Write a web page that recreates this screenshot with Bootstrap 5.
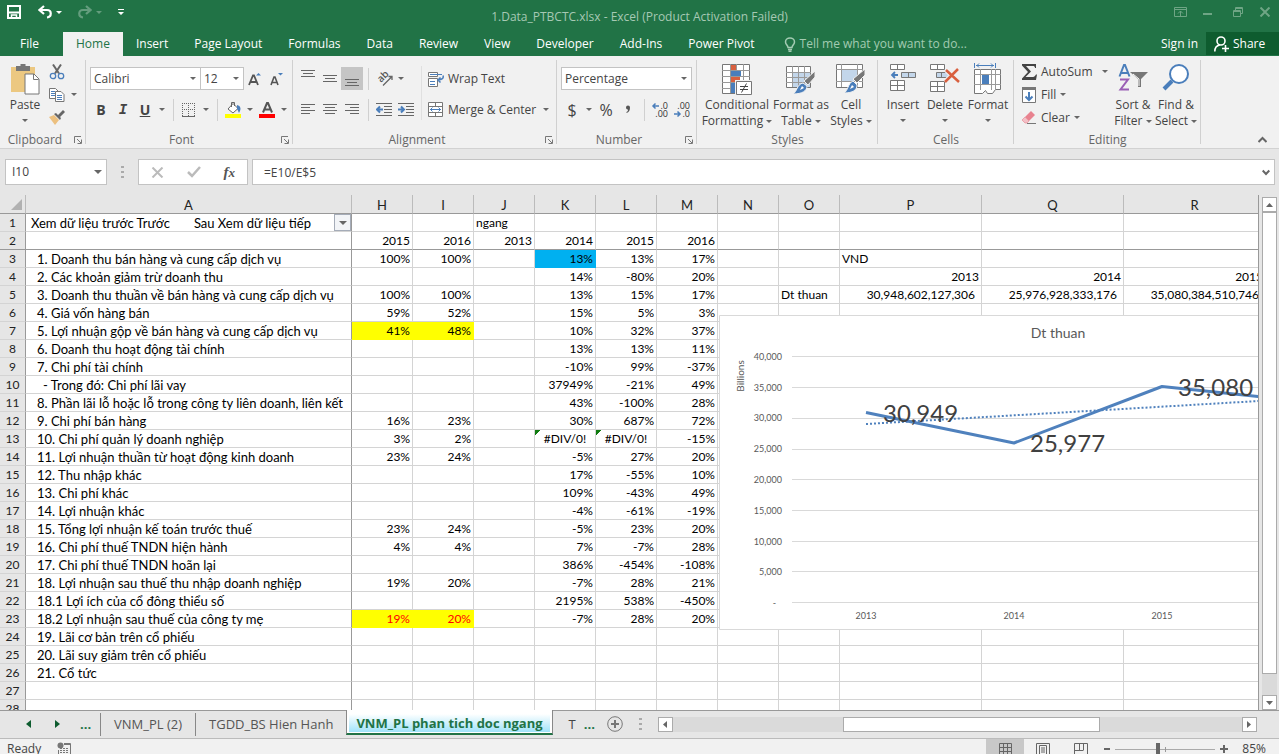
<!DOCTYPE html>
<html lang="en">
<head>
<meta charset="utf-8">
<meta name="viewport" content="width=device-width, initial-scale=1">
<title>1.Data_PTBCTC.xlsx - Excel</title>
<link href="https://cdn.jsdelivr.net/npm/bootstrap@5.3.0/dist/css/bootstrap.min.css" rel="stylesheet">
<style>
:root{--xl:#217346;--ink:#444;--line:#d4d4d4;--edge:#999;--chrome:#e6e6e6}
body{font:12px/16px "Open Sans","Noto Sans",sans-serif;color:var(--ink);background:var(--chrome);height:100vh;overflow:hidden}
button{font:inherit;color:inherit;background:none;border:0;padding:0}
svg{display:block;flex:none}
.titlebar{height:32px;background:var(--xl);color:#a6c9b4}
.caption-text{left:0;right:0;top:9px;pointer-events:none}
.quick{padding-left:6px}
.quick .dim{opacity:.3}
.quick .tri{border-top-color:#fff}
.win{gap:12px;color:#6fa585}
.tabs-bar{height:24px;background:var(--xl);color:#fff}
.tabs-bar .nav-link{color:#fff;padding:4px 13px;border:0;border-radius:0;line-height:16px}
.tabs-bar .nav-link.active{background:#f1f1f1;color:var(--xl)}
.tabs-bar .file-tab{padding-left:20px;padding-right:24px}
.tell{color:#a3cbb2}
.share{background:#0e5c2f;height:23px;width:73px}
.ribbon{height:93px;background:#f1f1f1;border-bottom:1px solid #d2d2d2}
.group{position:relative;padding-bottom:1px}
.group::after{content:"";position:absolute;right:0;top:4px;bottom:4px;width:1px;background:#d0d0d0}
.group-body{height:76px}
.group-name{height:16px;color:#666;text-align:center;position:relative}
.launch{position:absolute;right:4px;top:4px}
.g-clip{width:86px}.g-font{width:207px}.g-align{width:264px}.g-num{width:140px}
.g-style{width:181px}.g-cells{width:136px}.g-edit{width:187px}
.tools{padding-top:11px;gap:8px}
.tool-row{height:23px;display:flex;align-items:center}
.ib{width:22px;height:23px;display:flex;align-items:center;justify-content:center}
.ib.on{background:#c5c5c5}
.ab{width:12px;height:23px;display:flex;align-items:center;justify-content:center}
.tri{display:inline-block;width:0;height:0;border:3px solid transparent;border-top-color:#666;border-bottom:0;vertical-align:middle}
.vr-s{width:10px;height:22px;background:linear-gradient(#d0d0d0,#d0d0d0) center/1px 100% no-repeat}
.vr-l{width:1px;height:54px;margin-top:10px;background:#e0e0e0}
.wide-tools{padding-left:6px}
.big{padding-top:7px;display:flex;flex-direction:column;align-items:center;text-align:center;white-space:nowrap}
.big svg{margin-bottom:2px}
.big>.tri{margin-top:6px}
.w-42{width:42px}.w-44{width:44px}.w-56{width:56px}.w-72{width:72px}
.letter{font-weight:700;font-size:14px}
.fx-label{font:italic 700 15px "Liberation Serif",serif;color:#555}
.overhang{overflow:visible}
.form-select,.form-control{font:inherit;color:var(--ink);border-radius:0;border:1px solid #c3c3c3;background-color:#fff;padding:0 3px;height:23px;
--bs-form-select-bg-img:url("data:image/svg+xml,%3Csvg xmlns='http://www.w3.org/2000/svg' viewBox='0 0 6 3'%3E%3Cpath d='M0 0h6L3 3z' fill='%23666'/%3E%3C/svg%3E");
background-size:6px 3px;background-position:right 4px center}
.sel-font{width:111px}.sel-size{width:44px;margin-left:-1px}.sel-num{width:131px}
.formula{height:46px;padding:10px 4px 10px 5px}
.formula .name-box{width:102px;height:26px;padding-left:6px;background-size:8px 4px}
.boxed{height:26px;border:1px solid #c3c3c3;background:#fff}
.fx-box{width:110px}
.formula .form-control{height:24px;border:0;padding-left:11px}
.grip{width:3px;height:12px;background:repeating-linear-gradient(#aaa 0 2px,transparent 2px 5px)}
.formula .grip{margin:0 14px}
.main-area{min-height:0}
.sheet{position:relative;overflow:hidden;background:#fff;border-right:1px solid var(--edge)}
.cells{table-layout:fixed;width:1266px;border-collapse:separate;border-spacing:0;font:12px/16px Lato,"Open Sans",sans-serif;color:#000}
.cells th,.cells td{height:18px;padding:1px 2px 0;border-right:1px solid var(--line);border-bottom:1px solid var(--line);overflow:hidden;white-space:nowrap;text-align:right}
.cells th{background:var(--chrome);font-weight:400;text-align:center;color:#222}
.cells thead th{height:19px;font-size:13px;border-right-color:#bbb;border-bottom-color:var(--edge)}
.cells tbody th{border-right-color:var(--edge);padding:1px 0 0}
.cells .c-a{text-align:left;font-size:13px;padding-left:11px;border-right-color:var(--edge);position:relative}
.cells .c-a.flush{padding-left:5px}
.cells .c-a.deep{padding-left:17px}
.cells .frozen>*{border-bottom-color:var(--edge)}
.cells .t-left{text-align:left}
.cells .money{padding-right:6px}
.cells .hl-y{background:#ff0;border-color:#ff0}
.cells .hl-b{background:#00b0f0;border-color:#00b0f0}
.cells .neg{color:#f00}
.cells .err{text-align:center;background:linear-gradient(135deg,#107c10 4px,transparent 4px) 0 0/8px 8px no-repeat}
.filter{position:absolute;right:0;top:0;width:17px;height:17px;border:1px solid #a5acb8;background:#f2f4f7;display:flex;align-items:center;justify-content:center}
.filter .tri{border-width:4px 4px 0}
.chart{position:absolute;left:719px;top:120px;font-family:Lato,"Open Sans",sans-serif}
.vbar{width:20px;padding:2px 2px 0 3px}
.sbtn{width:15px;height:15px;border:1px solid #ababab;background:#fff;display:flex;align-items:center;justify-content:center}
.track{background:#dadada}
.thumb{background:#fff;border:1px solid #ababab}
.vthumb{flex:462 0 0}.vgap{flex:21 0 0}
.sheetbar{height:29px;border-bottom:1px solid #bbb;font-size:13px}
.sheetbar .nav-part{border-top:1px solid var(--edge)}
.tab-nav{width:100px;height:25px;padding-left:26px}
.tab-more{width:105px;height:25px}
.tab-btn{height:23px;line-height:20px;padding:0 13px 2px;border-left:1px solid #888;margin-top:2px;white-space:nowrap;color:#555}
.tab-on{height:25px;border:solid #888;border-width:0 1px;border-bottom:2px solid var(--xl);background:linear-gradient(#fff,#a0e3fa) 2px 4px/calc(100% - 4px) 18px no-repeat #fff;color:var(--xl);font-weight:700;padding:2px 9px 0;white-space:nowrap}
.dots{color:var(--xl);font-weight:700}
.hscroll{padding:6px 22px 0 0}
.hthumb{flex:255 0 0;height:15px}.hgap-a{flex:171 0 0;height:15px}.hgap-b{flex:142 0 0;height:15px}
.status{height:15px;background:#f1f1f1;overflow:hidden;padding-left:7px}
.status .line{height:20px;display:flex;align-items:center}
.view{width:38px;height:20px;display:flex;align-items:center;justify-content:center}
.view.on{background:#c8c8c8}
.zoom-range{appearance:none;width:100px;height:14px;background:linear-gradient(#999,#999) 50px 50%/1px 5px no-repeat,linear-gradient(#aaa,#aaa) 0 50%/100% 1px no-repeat;margin:0 5px}
.zoom-range::-webkit-slider-thumb{appearance:none;width:4px;height:12px;background:#666}
.zoom-label{padding:0 13px 0 14px}
</style>
</head>
<body class="d-flex flex-column">

<header>
  <div class="titlebar d-flex align-items-center position-relative">
    <div class="quick d-flex align-items-center pb-2 text-white">
      <button aria-label="Save"><svg width="16" height="16" viewBox="0 0 16 16" fill="none" stroke="#fff" stroke-width="2"><path d="M2 2h12v12H2zM3 8.500h10" /><path d="M5.500 14v-3h5v3" stroke-width="1.500"/></svg></button>
      <button class="ms-3" aria-label="Undo"><svg width="14" height="14" viewBox="0 0 14 14" fill="none" stroke="#fff" stroke-width="2.200"><path d="M6 1L1.500 5 6 9M2 5h7c5 0 5 7 0 7.500"/></svg></button>
      <span class="tri ms-1"></span>
      <button class="ms-3 dim" aria-label="Redo"><svg width="14" height="14" viewBox="0 0 14 14" fill="none" stroke="#fff" stroke-width="2.200"><path d="M8 1l4.500 4L8 9M12 5H5c-5 0-5 7 0 7.500"/></svg></button>
      <span class="tri ms-1 dim"></span>
      <button class="ms-3" aria-label="Customize"><svg width="6" height="6" viewBox="0 0 6 6" fill="#fff"><path d="M0 0h6v1H0zM0 3h6L3 6z"/></svg></button>
    </div>
    <div class="caption-text position-absolute text-center">1.Data_PTBCTC.xlsx - Excel (Product Activation Failed)</div>
    <div class="win d-flex align-items-center ms-auto pb-2 pe-2">
      <button aria-label="Ribbon options"><svg width="13" height="10" viewBox="0 0 13 10" fill="none" stroke="currentColor"><path d="M.5.500h12v9H.5zM0 2.500h13M6.500 9V4M4 6.500L6.500 4 9 6.500"/></svg></button>
      <button class="ms-1" aria-label="Minimize"><svg width="10" height="10" viewBox="0 0 10 10" fill="currentColor"><path d="M0 6h9v2H0z"/></svg></button>
      <button class="ms-1" aria-label="Restore"><svg width="18" height="10" viewBox="-4 0 18 10" fill="none" stroke="currentColor"><path d="M.5 3.500h7v6h-7zM.5 4.500h7M2.500 3V.500h7v6H8M2.500 1.500h7"/></svg></button>
      <button aria-label="Close"><svg width="12" height="10" viewBox="0 0 12 10" fill="none" stroke="currentColor" stroke-width="2"><path d="M1.500.500l9 9M10.500.500l-9 9"/></svg></button>
    </div>
  </div>
  <nav class="tabs-bar d-flex align-items-start">
    <div class="nav nav-tabs border-0 flex-nowrap text-nowrap">
      <a class="nav-link file-tab" href="#">File</a>
      <a class="nav-link active" href="#">Home</a>
      <a class="nav-link" href="#">Insert</a>
      <a class="nav-link" href="#">Page Layout</a>
      <a class="nav-link" href="#">Formulas</a>
      <a class="nav-link" href="#">Data</a>
      <a class="nav-link" href="#">Review</a>
      <a class="nav-link" href="#">View</a>
      <a class="nav-link" href="#">Developer</a>
      <a class="nav-link" href="#">Add-Ins</a>
      <a class="nav-link" href="#">Power Pivot</a>
    </div>
    <button class="tell d-flex align-items-center pt-1 ms-3 text-nowrap"><svg class="me-1" width="12" height="15" viewBox="0 0 12 15" fill="none" stroke="currentColor" stroke-width="1.500"><path d="M4 10.500c0-2-2.500-3-2.500-5.500a4.500 4 0 0 1 9 0c0 2.500-2.500 3.500-2.500 5.500zM4 12.500h4M4.500 14.200h3"/></svg>Tell me what you want to do...</button>
    <a class="ms-auto pt-1 pe-2 text-white text-decoration-none" href="#">Sign in</a>
    <button class="share d-flex align-items-center text-white ps-2"><svg width="15" height="16" viewBox="0 0 15 16" fill="none" stroke="#fff" stroke-width="1.600"><circle cx="7" cy="5" r="4"/><path d="M.8 15.500c0-4 2-6 5-6.500M8 12.500h7M11.500 9v7"/></svg><span class="ms-1">Share</span></button>
  </nav>
</header>

<section class="ribbon d-flex" aria-label="Ribbon">
  <div class="group g-clip">
    <div class="group-body d-flex">
      <button class="big w-42 ms-1"><svg width="30" height="32" viewBox="0 0 30 32"><path d="M1 4h24v25H1z" fill="#ecc881"/><path d="M6 3h4.500V1h5v2H20v5H6z" fill="#777"/><path d="M15 11h9l5 5v15H15z" fill="#fff" stroke="#777"/><path d="M23.500 11v5.500h5" fill="none" stroke="#777"/></svg>Paste<span class="tri"></span></button>
      <div class="pt-1">
        <div class="tool-row"><button class="ib" aria-label="Cut"><svg width="16" height="16" viewBox="0 0 16 16" fill="none"><path d="M4 .500l6 9M12 .500l-6 9" stroke="#666" stroke-width="2"/><circle cx="4" cy="12" r="2.700" stroke="#4a7ebb" stroke-width="1.300"/><circle cx="12" cy="12" r="2.700" stroke="#4a7ebb" stroke-width="1.300"/></svg></button></div>
        <div class="tool-row"><button class="ib" aria-label="Copy"><svg width="16" height="16" viewBox="0 0 16 16" fill="#fff" stroke="#777"><path d="M.5 1.500h6l3 3v7h-9z"/><path d="M2 4.500h4M2 6.500h4M2 8.500h4" stroke="#4a7ebb"/><path d="M6.500 4.500h5.500l3 3v7h-8.500z"/><path d="M8 8.500h5M8 10.500h5M8 12.500h5" stroke="#4a7ebb"/></svg></button><button class="ab" aria-label="Copy options"><span class="tri"></span></button></div>
        <div class="tool-row"><button class="ib" aria-label="Format Painter"><svg width="16" height="15" viewBox="0 0 16 15"><path d="M0 7l5-2 5 5-4 5z" fill="#ecc07f"/><path d="M5 4l2-1 5 5-1 2zM9 5l5-5 2 2-5 5z" fill="#666"/></svg></button></div>
      </div>
    </div>
    <div class="group-name pe-3">Clipboard<button class="launch" aria-label="Clipboard settings"><svg width="8" height="8" viewBox="0 0 8 8" fill="none" stroke="#777"><path d="M.5 7V.500H7M3 3l4 4M7.500 3.500v4h-4"/></svg></button></div>
  </div>

  <div class="group g-font">
    <div class="group-body tools d-flex flex-column ps-1">
      <div class="tool-row">
        <select class="form-select sel-font" aria-label="Font"><option>Calibri</option></select>
        <select class="form-select sel-size" aria-label="Font size"><option>12</option></select>
        <button class="ib" aria-label="Grow font"><svg width="15" height="14" viewBox="0 0 15 14"><path d="M1 13L5 3.500h1L10 13M2.500 10h6" fill="none" stroke="#555" stroke-width="1.800"/><path d="M8 3.500h5L10.500 1z" fill="#4a7ebb"/></svg></button>
        <button class="ib" aria-label="Shrink font"><svg width="14" height="14" viewBox="0 0 14 14"><path d="M1 13l3-8h1l3 8M2 10.500h5" fill="none" stroke="#555" stroke-width="1.600"/><path d="M8 1h5l-2.500 2.500z" fill="#4a7ebb"/></svg></button>
      </div>
      <div class="tool-row">
        <button class="ib letter" aria-label="Bold">B</button>
        <button class="ib letter fst-italic font-monospace" aria-label="Italic">I</button>
        <button class="ib letter text-decoration-underline" aria-label="Underline">U</button>
        <button class="ab" aria-label="Underline options"><span class="tri"></span></button>
        <span class="vr-s"></span>
        <button class="ib" aria-label="Borders"><svg width="14" height="14" viewBox="0 0 14 14" fill="none" stroke="#666"><path d="M.5 0v13M6.500 0v13M12.500 0v13M0 .500h13M0 6.500h13" stroke-dasharray="1 1"/><path d="M0 13.500h13"/></svg></button>
        <button class="ab" aria-label="Border options"><span class="tri"></span></button>
        <span class="vr-s"></span>
        <button class="ib" aria-label="Fill color"><svg width="17" height="17" viewBox="0 0 17 17"><path d="M3 8l5-5.500 5 5L8 12z" fill="#fff" stroke="#666"/><path d="M6.500 6V1.500h3V5" fill="none" stroke="#666"/><path d="M12 4c4 1 4.500 4 2 8-1-2-1-3-2-4z" fill="#4a7ebb"/><path d="M0 13h16v4H0z" fill="#ff0"/></svg></button>
        <button class="ab" aria-label="Fill options"><span class="tri"></span></button>
        <button class="ib" aria-label="Font color"><svg width="17" height="17" viewBox="0 0 17 17"><path d="M4 11.500L8 2h1l4 9.500M5.500 8.500h6" fill="none" stroke="#555" stroke-width="2"/><path d="M0 13h16v4H0z" fill="#f00"/></svg></button>
        <button class="ab" aria-label="Font color options"><span class="tri"></span></button>
      </div>
    </div>
    <div class="group-name pe-3">Font<button class="launch" aria-label="Font settings"><svg width="8" height="8" viewBox="0 0 8 8" fill="none" stroke="#777"><path d="M.5 7V.500H7M3 3l4 4M7.500 3.500v4h-4"/></svg></button></div>
  </div>

  <div class="group g-align">
    <div class="group-body d-flex ps-1">
      <div class="tools d-flex flex-column">
        <div class="tool-row">
          <button class="ib" aria-label="Top align"><svg width="14" height="18" viewBox="0 0 14 18" stroke="#666"><path d="M0 .500h14M2 3.500h10M0 6.500h14"/></svg></button>
          <button class="ib" aria-label="Middle align"><svg width="14" height="18" viewBox="0 0 14 18" stroke="#666"><path d="M0 5.500h14M2 8.500h10M0 11.500h14"/></svg></button>
          <button class="ib on" aria-label="Bottom align"><svg width="14" height="18" viewBox="0 0 14 18" stroke="#666"><path d="M0 9.500h14M2 12.500h10M0 15.500h14"/></svg></button>
          <span class="vr-s"></span>
          <button class="ib" aria-label="Orientation"><svg class="overhang" width="17" height="16" viewBox="0 0 17 16"><text font-size="10" font-weight="600" fill="#555" transform="translate(5 12) rotate(-45)">ab</text><path d="M7 14.500l9-9M12.500 5.500H16V9" fill="none" stroke="#666" stroke-width="1.300"/></svg></button>
          <button class="ab" aria-label="Orientation options"><span class="tri"></span></button>
        </div>
        <div class="tool-row">
          <button class="ib" aria-label="Align left"><svg width="14" height="11" viewBox="0 0 14 11" stroke="#666"><path d="M0 .500h14M0 3.500h9M0 6.500h14M0 9.500h9"/></svg></button>
          <button class="ib" aria-label="Center"><svg width="14" height="11" viewBox="0 0 14 11" stroke="#666"><path d="M0 .500h14M2 3.500h10M0 6.500h14M2 9.500h10"/></svg></button>
          <button class="ib" aria-label="Align right"><svg width="14" height="11" viewBox="0 0 14 11" stroke="#666"><path d="M0 .500h14M5 3.500h9M0 6.500h14M5 9.500h9"/></svg></button>
          <span class="vr-s"></span>
          <button class="ib" aria-label="Decrease indent"><svg width="16" height="13" viewBox="0 0 16 13" fill="none" stroke="#666"><path d="M0 .500h16M8 3.500h8M8 6.500h8M8 9.500h8M0 12.500h16"/><path d="M7 6.500H1M4 3.500l-3 3 3 3" stroke="#4a7ebb" stroke-width="2"/></svg></button>
          <button class="ib" aria-label="Increase indent"><svg width="16" height="13" viewBox="0 0 16 13" fill="none" stroke="#666"><path d="M0 .500h16M8 3.500h8M8 6.500h8M8 9.500h8M0 12.500h16"/><path d="M0 6.500h6M3 3.500l3 3-3 3" stroke="#4a7ebb" stroke-width="2"/></svg></button>
        </div>
      </div>
      <span class="vr-l ms-1"></span>
      <div class="tools wide-tools d-flex flex-column text-nowrap">
        <div class="tool-row"><button class="d-flex align-items-center gap-1"><svg width="16" height="16" viewBox="0 0 16 16" fill="#fff" stroke="#777"><path d="M.5 1.500h9v4h-9zM.5 7.500h9v8h-9z"/><path d="M2 3.500h12M2 10.500h5M2 13.500h5" stroke="#4a7ebb"/><path d="M15 4.500c1 3-1 4-5 4.500M12.500 6.500L10 9l2.500 2.500" fill="none" stroke="#4a7ebb" stroke-width="1.500"/></svg>Wrap Text</button></div>
        <div class="tool-row"><button class="d-flex align-items-center gap-1"><svg width="16" height="16" viewBox="0 0 16 16" fill="#fff" stroke="#777"><path d="M.5.500h14v14H.5zM.5 4.500h14M.5 10.500h14M7.500.500v4M7.500 10.500v4"/><path d="M2 7.500h11M4.500 5.500l-2 2 2 2M10.500 5.500l2 2-2 2" fill="none" stroke="#4a7ebb"/></svg>Merge &amp; Center</button><button class="ab ms-1" aria-label="Merge options"><span class="tri"></span></button></div>
      </div>
    </div>
    <div class="group-name pe-3">Alignment<button class="launch" aria-label="Alignment settings"><svg width="8" height="8" viewBox="0 0 8 8" fill="none" stroke="#777"><path d="M.5 7V.500H7M3 3l4 4M7.500 3.500v4h-4"/></svg></button></div>
  </div>

  <div class="group g-num">
    <div class="group-body tools d-flex flex-column ps-1">
      <div class="tool-row"><select class="form-select sel-num" aria-label="Number format"><option>Percentage</option></select></div>
      <div class="tool-row">
        <button class="ib fs-6" aria-label="Accounting">$</button>
        <button class="ab" aria-label="Accounting options"><span class="tri"></span></button>
        <button class="ib fs-6" aria-label="Percent">%</button>
        <button class="ib" aria-label="Comma"><svg width="6" height="9" viewBox="0 0 6 9"><path d="M1 2.500a2 2 0 0 1 4 0c0 3-1 4.500-3.500 5.500v-1c1-.5 1.500-1 1.500-2.500C2 4.500 1 4 1 2.500z" fill="#555"/></svg></button>
        <span class="vr-s"></span>
        <button class="ib" aria-label="Increase decimal"><svg class="overhang" width="16" height="16" viewBox="0 0 16 16"><g font-size="9" fill="#333" text-anchor="end"><text x="16" y="7">.0</text><text x="16" y="15">.00</text></g><path d="M7 4H1M3.500 1.500L1 4l2.500 2.500" fill="none" stroke="#4a7ebb" stroke-width="1.500"/></svg></button>
        <button class="ib" aria-label="Decrease decimal"><svg class="overhang" width="16" height="16" viewBox="0 0 16 16"><g font-size="9" fill="#333" text-anchor="end"><text x="16" y="7">.00</text><text x="16" y="15">.0</text></g><path d="M0 12h6M3.500 9.500L6 12l-2.500 2.500" fill="none" stroke="#4a7ebb" stroke-width="1.500"/></svg></button>
      </div>
    </div>
    <div class="group-name pe-3">Number<button class="launch" aria-label="Number settings"><svg width="8" height="8" viewBox="0 0 8 8" fill="none" stroke="#777"><path d="M.5 7V.500H7M3 3l4 4M7.500 3.500v4h-4"/></svg></button></div>
  </div>

  <div class="group g-style">
    <div class="group-body d-flex ps-1">
      <button class="big w-72"><svg width="30" height="32" viewBox="0 0 30 32"><path d="M.5 1.500h27v29H.5z" fill="#fff" stroke="#777"/><path d="M8.500 1v29M14.500 1v29M21.500 1v29M0 7.500h28M0 13.500h28M0 19.500h28M0 25.500h28" stroke="#999"/><path d="M9 2h5v5H9zM9 14h9v5H9z" fill="#d9603f"/><path d="M9 8h10v5H9zM9 20h6v10H9z" fill="#4a7ebb"/><path d="M13 17h17v15H13z" fill="#f1f1f1"/><path d="M14.500 18.500h15v13h-15z" fill="#fff" stroke="#777"/><path d="M18 23.500h8M18 26.500h8M24.500 20.500l-5 9" stroke="#444" fill="none"/></svg>Conditional<br><span>Formatting <span class="tri"></span></span></button>
      <button class="big w-56"><svg width="30" height="32" viewBox="0 0 30 32"><path d="M.5 3.500h24v21H.5z" fill="#fff" stroke="#777"/><path d="M6 9h18v15H6z" fill="#c3d6ea"/><path d="M6.500 3v21M12.500 3v21M18.500 3v21M0 9.500h25M0 14.500h25M0 19.500h25" stroke="#999"/><path d="M29 8v6l-7 8-4-4z" fill="#777" stroke="#f1f1f1"/><path d="M17 20l4 3c0 5-5 8-14 8 4-2 4-10 10-11z" fill="#4a7ebb" stroke="#f1f1f1"/><path d="M16 23l2 2-4 2z" fill="#fff"/></svg>Format as<br><span>Table <span class="tri"></span></span></button>
      <button class="big w-44"><svg width="30" height="32" viewBox="0 0 30 32"><path d="M.5 1.500h26v23H.5z" fill="#fff" stroke="#777"/><path d="M5.500 1v23M21.500 1v23M0 6.500h27M0 18.500h27" stroke="#999"/><path d="M6 7h15v11H6z" fill="#c3d6ea"/><path d="M29 6v6l-8 8-4-4z" fill="#777" stroke="#f1f1f1"/><path d="M17 18l4 4c0 5-4 8-13 8 4-2 4-10 9-12z" fill="#4a7ebb" stroke="#f1f1f1"/><path d="M16 22l2 2-4 2z" fill="#fff"/></svg>Cell<br><span>Styles <span class="tri"></span></span></button>
    </div>
    <div class="group-name">Styles</div>
  </div>

  <div class="group g-cells">
    <div class="group-body d-flex ps-1">
      <button class="big w-42"><svg width="27" height="32" viewBox="0 0 27 32" fill="#fff" stroke="#777"><path d="M.5 1.500h14v5H.5zM7.500 1.500v5M.5 17.500h14v10H.5zM7.500 17.500v10M.5 22.500h14"/><path d="M11.500 9.500h14v5h-14zM18.500 9.500v5" fill="#c3d6ea"/><path d="M8 12H2M5 9l-3 3 3 3" fill="none" stroke="#4a7ebb" stroke-width="1.800"/></svg>Insert<span class="tri"></span></button>
      <button class="big w-42"><svg width="30" height="32" viewBox="0 0 30 32" fill="#fff" stroke="#777"><path d="M.5 1.500h14v5H.5zM7.500 1.500v5M.5 18.500h14v10H.5zM7.500 18.500v10M.5 23.500h14"/><path d="M6.500 9.500h12v5h-12zM11.500 9.500v5" fill="#c3d6ea"/><path d="M16 7l13 12M28 6L15 19" stroke="#f1f1f1" stroke-width="5"/><path d="M16 7l13 12M28 6L15 19" stroke="#d9603f" stroke-width="2.500"/></svg>Delete<span class="tri"></span></button>
      <button class="big w-44"><svg width="30" height="32" viewBox="0 0 30 32" fill="#fff" stroke="#777"><path d="M1.500 6.500h26v20h-5l-3 4h-5l-2-3-3 3h-8z"/><path d="M7.500 6v21M18.500 6v21M22.500 6v21M1 11.500h27M1 21.500h27" stroke="#999"/><path d="M9 12h7v9H9z" fill="#4a7ebb" stroke="none"/><path d="M1.500 0v5M22.500 0v5M3 2.500h18M6 .500l-2 2 2 2M18 .500l2 2-2 2" fill="none" stroke="#4a7ebb"/></svg>Format<span class="tri"></span></button>
    </div>
    <div class="group-name">Cells</div>
  </div>

  <div class="group g-edit">
    <div class="group-body d-flex ps-2">
      <div class="pt-1 flex-grow-1 text-nowrap">
        <div class="tool-row"><button class="d-flex align-items-center gap-1"><svg width="15" height="16" viewBox="0 0 15 16"><path d="M0 0h14v4h-1c0-1.500-1-2-2-2H4l5 5.500L3.500 13H11c1.500 0 2-1 3-2.500h1L14 16H0v-1.500L6 8 0 1.500z" fill="#444"/></svg>AutoSum</button><button class="ab ms-auto" aria-label="AutoSum options"><span class="tri"></span></button></div>
        <div class="tool-row"><button class="d-flex align-items-center gap-1"><svg width="15" height="16" viewBox="0 0 15 16"><path d="M.5.500h13v15H.5z" fill="#fff" stroke="#777"/><path d="M0 0h14v3H0z" fill="#777"/><path d="M7 5v8M3.500 9.500L7 13l3.500-3.500" fill="none" stroke="#4a7ebb" stroke-width="2"/></svg>Fill<span class="tri"></span></button></div>
        <div class="tool-row"><button class="d-flex align-items-center gap-1"><svg width="15" height="14" viewBox="0 0 15 14"><path d="M3 6l6-6 4 4-6 6z" fill="#e8828f"/><path d="M3 6L0 9l3 3h2l2-2z" fill="#f3c0c6" stroke="#e8828f" stroke-width=".6"/><path d="M5 12.500h9" stroke="#777"/></svg>Clear<span class="tri"></span></button></div>
      </div>
      <button class="big w-44"><svg width="30" height="32" viewBox="0 0 30 32"><g fill="none" stroke-width="2"><path d="M1.500 13.500L6 2h1l4.500 11.500M3 10h7" stroke="#4a7ebb"/><path d="M2 16.500h8L2.500 26.500H11" stroke="#9a5fb5"/></g><path d="M12 9h18l-7 7v8h-3v-8z" fill="#777"/><path d="M15 11l6 5v7" fill="none" stroke="#fff"/></svg>Sort &amp;<br><span>Filter <span class="tri"></span></span></button>
      <button class="big w-42 me-1"><svg width="28" height="32" viewBox="0 0 28 32"><path d="M10 18L2 26" stroke="#4a7ebb" stroke-width="4"/><circle cx="17" cy="11" r="9" fill="#fff" stroke="#4a7ebb" stroke-width="2"/></svg>Find &amp;<br><span>Select <span class="tri"></span></span></button>
    </div>
    <div class="group-name">Editing</div>
  </div>
  <button class="ms-auto align-self-end pe-2 pb-1 me-1" aria-label="Collapse ribbon"><svg width="9" height="8" viewBox="0 0 9 8" fill="none" stroke="#666" stroke-width="2"><path d="M.5 6l4-4 4 4"/></svg></button>
</section>

<section class="formula d-flex align-items-center">
  <select class="form-select name-box" aria-label="Name box"><option>I10</option></select>
  <span class="grip"></span>
  <div class="boxed fx-box d-flex align-items-center justify-content-between px-2 me-1">
    <button class="ms-1" aria-label="Cancel"><svg width="13" height="11" viewBox="0 0 13 11" stroke="#bbb" stroke-width="2"><path d="M1.500.500l10 10M11.500.500l-10 10"/></svg></button>
    <button aria-label="Enter"><svg width="14" height="12" viewBox="0 0 14 12" fill="none" stroke="#bbb" stroke-width="2.500"><path d="M1 6l4 4 8-9"/></svg></button>
    <button class="fx-label me-1" aria-label="Insert function">f<small>x</small></button>
  </div>
  <div class="boxed d-flex align-items-center flex-grow-1">
    <input class="form-control" type="text" value="=E10/E$5" aria-label="Formula">
    <button class="px-1" aria-label="Expand formula bar"><svg width="8" height="7" viewBox="0 0 8 7" fill="none" stroke="#666" stroke-width="2"><path d="M.7 1.500L4 5l3.300-3.500"/></svg></button>
  </div>
</section>

<main class="main-area d-flex flex-grow-1">
  <div class="sheet flex-grow-1">
    <table class="cells">
      <colgroup id="cols"></colgroup>
      <thead><tr id="head"></tr></thead>
      <tbody id="rows"></tbody>
    </table>
    <svg class="chart" width="678" height="315" viewBox="0 0 678 315" role="img" aria-label="Dt thuan">
      <path d="M.5.500h677v314H.5z" fill="#fff" stroke="#d9d9d9"/>
      <path d="M73 41.500h600M73 72.500h600M73 103.500h600M73 134.500h600M73 164.500h600M73 195.500h600M73 226.500h600M73 256.500h600M73 287.500h600" stroke="#d9d9d9"/>
      <path d="M147 109l444-26" stroke="#4f81bd" stroke-width="2" stroke-dasharray="2 2"/>
      <path d="M147 97.500l148 30.500 148-56.500 148 15.500" fill="none" stroke="#4f81bd" stroke-width="3" stroke-linejoin="round"/>
      <g fill="#595959">
        <text x="339" y="23" font-size="14" text-anchor="middle">Dt thuan</text>
        <g font-size="9" text-anchor="end">
          <text x="63" y="45">40,000</text><text x="63" y="76">35,000</text><text x="63" y="106">30,000</text>
          <text x="63" y="137">25,000</text><text x="63" y="168">20,000</text><text x="63" y="199">15,000</text>
          <text x="63" y="230">10,000</text><text x="63" y="260">5,000</text><text x="57" y="291">-</text>
        </g>
        <g font-size="9" text-anchor="middle">
          <text x="147" y="304">2013</text><text x="295" y="304">2014</text><text x="443" y="304">2015</text>
          <text font-size="10" transform="translate(25 61) rotate(-90)">Billions</text>
        </g>
      </g>
      <g font-size="24" fill="#404040"><text x="164" y="107">30,949</text><text x="311" y="137">25,977</text><text x="459" y="81">35,080</text></g>
    </svg>
  </div>
  <div class="vbar d-flex flex-column">
    <button class="sbtn" aria-label="Scroll up"><svg width="7" height="4" viewBox="0 0 7 4"><path d="M0 4h7L3.500 0z" fill="#666"/></svg></button>
    <div class="thumb vthumb"></div>
    <div class="track vgap"></div>
    <button class="sbtn" aria-label="Scroll down"><svg width="7" height="4" viewBox="0 0 7 4"><path d="M0 0h7L3.500 4z" fill="#666"/></svg></button>
  </div>
</main>

<footer>
  <div class="sheetbar d-flex align-items-start">
    <div class="nav-part d-flex">
      <div class="tab-nav d-flex align-items-center">
        <button aria-label="Previous sheet"><svg width="5" height="8" viewBox="0 0 5 8"><path d="M5 0v8L0 4z" fill="#0e5c2f"/></svg></button>
        <button class="ms-4" aria-label="Next sheet"><svg width="5" height="8" viewBox="0 0 5 8"><path d="M0 0v8l5-4z" fill="#0e5c2f"/></svg></button>
        <span class="dots ms-3 ps-1">...</span>
      </div>
      <button class="tab-btn">VNM_PL (2)</button>
      <button class="tab-btn">TGDD_BS Hien Hanh</button>
    </div>
    <button class="tab-on">VNM_PL phan tich doc ngang</button>
    <div class="nav-part d-flex flex-grow-1">
      <div class="tab-more d-flex align-items-center">
        <button class="ms-3">T</button><span class="dots ms-2">...</span>
        <button class="ms-2 ps-1" aria-label="New sheet"><svg width="16" height="16" viewBox="0 0 16 16" fill="none" stroke="#777"><circle cx="8" cy="8" r="7.300"/><path d="M8 4v8M4 8h8" stroke-width="2"/></svg></button>
        <span class="grip ms-auto me-3"></span>
      </div>
      <div class="hscroll d-flex flex-grow-1">
        <button class="sbtn" aria-label="Scroll left"><svg width="4" height="7" viewBox="0 0 4 7"><path d="M4 0v7L0 3.500z" fill="#666"/></svg></button>
        <div class="track hgap-a"></div><div class="thumb hthumb"></div><div class="track hgap-b"></div>
        <button class="sbtn" aria-label="Scroll right"><svg width="4" height="7" viewBox="0 0 4 7"><path d="M0 0v7l4-3.500z" fill="#666"/></svg></button>
      </div>
    </div>
  </div>
  <div class="status">
    <div class="line">
      <span>Ready</span>
      <button class="ms-3" aria-label="Record macro"><svg width="14" height="14" viewBox="0 0 14 14" fill="none" stroke="#777"><circle cx="3.500" cy="3.500" r="3" fill="#777" stroke="none"/><path d="M7 1.500h6.500v12H1.500V8M7 2.500h6"/><path d="M3 6.500h9M3 8.500h9M3 10.500h9" stroke-dasharray="2 1"/></svg></button>
      <button class="view on ms-auto" aria-label="Normal view"><svg width="13" height="13" viewBox="0 0 13 13" fill="none" stroke="#666"><path d="M.5.500h12v12H.5zM4.500 0v13M8.500 0v13M0 4.500h13M0 8.500h13"/></svg></button>
      <button class="view" aria-label="Page layout view"><svg width="14" height="13" viewBox="0 0 14 13" fill="none" stroke="#666"><path d="M.5.500h13v14H.5zM3.500 2.500h7v10h-7zM5 5h4M5 7h4M5 9h4"/></svg></button>
      <button class="view" aria-label="Page break view"><svg width="14" height="13" viewBox="0 0 14 13" fill="none" stroke="#666"><path d="M.5 13V.500h13V13M5.500 1v6M9.500 1v6M.5 7.500h9"/></svg></button>
      <button class="ms-1" aria-label="Zoom out"><svg width="6" height="8" viewBox="0 0 6 8"><path d="M0 3h6v2H0z" fill="#666"/></svg></button>
      <input class="zoom-range" type="range" min="0" max="100" value="42" aria-label="Zoom">
      <button aria-label="Zoom in"><svg width="8" height="8" viewBox="0 0 8 8"><path d="M0 3h8v2H0zM3 0h2v8H3z" fill="#666"/></svg></button>
      <span class="zoom-label">85%</span>
    </div>
  </div>
</footer>

<script src="https://cdn.jsdelivr.net/npm/bootstrap@5.3.0/dist/js/bootstrap.bundle.min.js"></script>
<script>
const columns = [['', 26], ['A', 326], ['H', 61], ['I', 61], ['J', 61], ['K', 61], ['L', 61], ['M', 61], ['N', 61], ['O', 61], ['P', 142], ['Q', 142], ['R', 142]];
// Each row: label, then H, I, J, K, L, M
const data = [
  ['', '', '', 'ngang'],
  ['', '2015', '2016', '2013', '2014', '2015', '2016'],
  ['1. Doanh thu bán hàng và cung cấp dịch vụ', '100%', '100%', '', '13%', '13%', '17%'],
  ['2. Các khoản giảm trừ doanh thu', '', '', '', '14%', '-80%', '20%'],
  ['3. Doanh thu thuần về bán hàng và cung cấp dịch vụ', '100%', '100%', '', '13%', '15%', '17%'],
  ['4. Giá vốn hàng bán', '59%', '52%', '', '15%', '5%', '3%'],
  ['5. Lợi nhuận gộp về bán hàng và cung cấp dịch vụ', '41%', '48%', '', '10%', '32%', '37%'],
  ['6. Doanh thu hoạt động tài chính', '', '', '', '13%', '13%', '11%'],
  ['7. Chi phí tài chính', '', '', '', '-10%', '99%', '-37%'],
  ['- Trong đó: Chi phí lãi vay', '', '', '', '37949%', '-21%', '49%'],
  ['8. Phần lãi lỗ hoặc lỗ trong công ty liên doanh, liên kết', '', '', '', '43%', '-100%', '28%'],
  ['9. Chi phí bán hàng', '16%', '23%', '', '30%', '687%', '72%'],
  ['10. Chi phí quản lý doanh nghiệp', '3%', '2%', '', '#DIV/0!', '#DIV/0!', '-15%'],
  ['11. Lợi nhuận thuần từ hoạt động kinh doanh', '23%', '24%', '', '-5%', '27%', '20%'],
  ['12. Thu nhập khác', '', '', '', '17%', '-55%', '10%'],
  ['13. Chi phí khác', '', '', '', '109%', '-43%', '49%'],
  ['14. Lợi nhuận khác', '', '', '', '-4%', '-61%', '-19%'],
  ['15. Tổng lợi nhuận kế toán trước thuế', '23%', '24%', '', '-5%', '23%', '20%'],
  ['16. Chi phí thuế TNDN hiện hành', '4%', '4%', '', '7%', '-7%', '28%'],
  ['17. Chi phí thuế TNDN hoãn lại', '', '', '', '386%', '-454%', '-108%'],
  ['18. Lợi nhuận sau thuế thu nhập doanh nghiệp', '19%', '20%', '', '-7%', '28%', '21%'],
  ['18.1 Lợi ích của cổ đông thiểu số', '', '', '', '2195%', '538%', '-450%'],
  ['18.2 Lợi nhuận sau thuế của công ty mẹ', '19%', '20%', '', '-7%', '28%', '20%'],
  ['19. Lãi cơ bản trên cổ phiếu'], ['20. Lãi suy giảm trên cổ phiếu'], ['21. Cổ tức'], [], []
];
data[2][9] = 'VND';
data[3][9] = '2013'; data[3][10] = '2014'; data[3][11] = '2015';
data[4][8] = 'Dt thuan'; data[4][9] = '30,948,602,127,306'; data[4][10] = '25,976,928,333,176'; data[4][11] = '35,080,384,510,746';
const styles = {J1: 't-left', P3: 't-left', O5: 't-left', P5: 'money', Q5: 'money', R5: 'money', K3: 'hl-b',
  H7: 'hl-y', I7: 'hl-y', H23: 'hl-y neg', I23: 'hl-y neg', K13: 'err', L13: 'err', A1: 'flush', A10: 'deep'};

document.getElementById('cols').innerHTML = columns.map(c => `<col style="width:${c[1]}px">`).join('');
document.getElementById('head').innerHTML = columns.map(c => c[0] ? `<th scope="col">${c[0]}</th>`
  : '<th><svg class="ms-auto" width="12" height="12" viewBox="0 0 12 12"><path d="M11 0v11H0z" fill="#b1b1b1"/></svg></th>').join('');
document.getElementById('rows').innerHTML = data.map((row, r) =>
  `<tr class="${r === 1 ? 'frozen' : ''}"><th scope="row">${r + 1}</th>` + columns.slice(1).map((c, i) => {
    const key = c[0] + (r + 1);
    const text = key === 'A1'
      ? '<span class="me-4">Xem dữ liệu trước Trước</span><span>Sau Xem dữ liệu tiếp</span><button class="filter" aria-label="Filter"><span class="tri"></span></button>'
      : row[i] || '';
    return `<td class="${i === 0 ? 'c-a ' : ''}${styles[key] || ''}">${text}</td>`;
  }).join('') + '</tr>').join('');
</script>
</body>
</html>
